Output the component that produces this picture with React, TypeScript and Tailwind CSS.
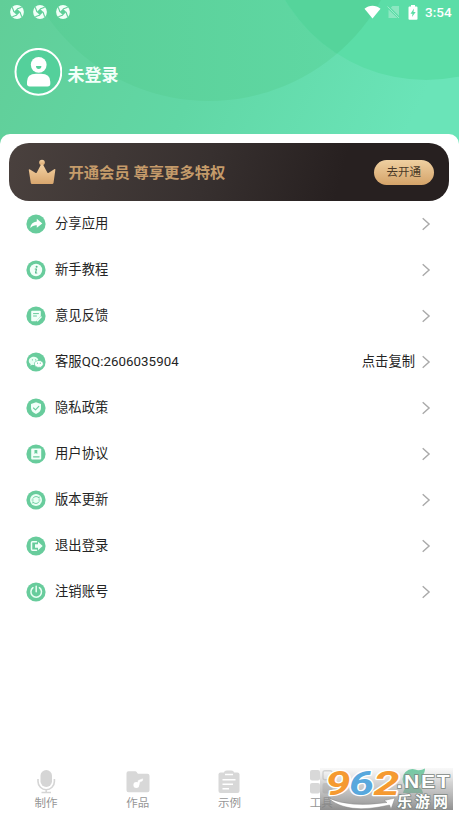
import type { ReactNode } from "react";

type IconProps = { className?: string };

function Aperture() {
  return (
    <svg viewBox="0 0 14 14" className="h-3.5 w-3.5">
      <circle cx="7" cy="7" r="6.900" fill="#f1fff8" />
      <path d="M3.700 7 7 3.700 10.300 7 7 10.300z" fill="#5ecf98" />
      <path d="M4 7 2.300 2.300M7 4 11.700 2.300M10 7 11.700 11.700M7 10 2.300 11.700" stroke="#5ecf98" strokeWidth="1.100" />
    </svg>
  );
}

function StatusBar() {
  return (
    <div className="relative flex h-6 items-center justify-between pr-[7px] pl-[10px]">
      <div className="flex gap-[9px]">
        <Aperture />
        <Aperture />
        <Aperture />
      </div>
      <div className="flex items-center">
        <svg viewBox="0 0 17 14" className="h-[14px] w-[17px]">
          <path d="M.5 3.700C5-.2 12-.2 16.500 3.700L8.500 13.500z" fill="#fff" />
        </svg>
        <svg viewBox="0 0 13 14" className="ml-[6px] h-[14px] w-[13px]">
          <path d="M5.500 1H12v10L3.800 2.800zM1.500 4.500 10.500 13H1.500z" fill="#fff" opacity=".3" />
          <path d="M.5 1.500 12 13" stroke="#fff" strokeWidth=".8" opacity=".5" />
        </svg>
        <svg viewBox="0 0 10 15" className="ml-[8px] h-[15px] w-[10px]">
          <path d="M3 0h4v1.500h1.500q1 0 1 1V14q0 .8-1 .8h-7q-1 0-1-.8V2.500q0-1 1-1H3z" fill="#fff" />
          <path d="M6 3.500 2.500 8.700h2L4 12l3.700-5H5.500z" fill="#5cdda6" />
        </svg>
        <span className="mt-px ml-[7px] w-[27px] font-[Roboto] text-[13.500px] leading-none font-medium text-white">3:54</span>
      </div>
    </div>
  );
}

function Header() {
  return (
    <header className="relative h-[134px]">
      <svg viewBox="0 0 459 146" className="absolute top-0 left-0 h-[146px] w-[459px]">
        <defs>
          <linearGradient id="sky" x1="0" x2="1" y1="0" y2=".15">
            <stop offset="0" stopColor="#61ce98" />
            <stop offset=".5" stopColor="#61d7a5" />
            <stop offset="1" stopColor="#6ae4b8" />
          </linearGradient>
          <linearGradient id="left" x1="0" x2="1">
            <stop offset="0" stopColor="#5acd95" />
            <stop offset="1" stopColor="#60daa6" />
          </linearGradient>
          <clipPath id="leftClip">
            <circle cx="209" cy="-96" r="197" />
          </clipPath>
        </defs>
        <rect width="459" height="146" fill="url(#sky)" />
        <circle cx="209" cy="-96" r="197" fill="url(#left)" />
        <circle cx="426" cy="-84" r="164" fill="#5bdda7" />
        <circle cx="426" cy="-84" r="164" fill="#55d49b" clipPath="url(#leftClip)" />
      </svg>
      <StatusBar />
      <div className="relative flex items-center pt-6 pl-[14px]">
        <svg viewBox="0 0 48 48" className="h-12 w-12">
          <circle cx="24.400" cy="23.800" r="22.900" fill="#54d09b" stroke="#fff" strokeWidth="2" />
          <circle cx="24.700" cy="16.800" r="7.900" fill="#fff" />
          <path d="M22 18h5.400a2.700 2.900 0 0 1-5.400 0z" fill="#54d09b" />
          <path d="M13 35.800v-2q0-8 9-8h5q9.300 0 9.300 8v2q0 2.700-2.700 2.700H15.700q-2.700 0-2.700-2.700z" fill="#fff" />
        </svg>
        <span className="mt-1.5 ml-[5.500px] text-[17px] leading-6 font-bold text-[#f3fffa]">未登录</span>
      </div>
    </header>
  );
}

function VipCard() {
  return (
    <section className="relative mr-[10px] ml-[9px] flex h-[58px] items-center overflow-hidden rounded-[20px] bg-linear-[105deg] from-[#4a413e] via-[#37302f] via-45% to-[#272020] to-75% pr-[15px] pl-[19px]">
      <svg viewBox="0 0 28 26" className="relative h-[26px] w-7">
        <defs>
          <linearGradient id="gold" x2="0" y2="1">
            <stop stopColor="#f3d1a2" />
            <stop offset="1" stopColor="#d8a66e" />
          </linearGradient>
        </defs>
        <circle cx="14" cy="3.500" r="2.800" fill="url(#gold)" />
        <path d="M13 5.500h2l4.300 8q.6.900 1.500.2l5.400-3.400q1.500-.7 1.100.9L25.500 24q-.3 1-1.300 1H4q-1 0-1.200-1L.8 11.200Q.6 9.700 2 10.400l5.300 3.400q.9.600 1.500-.3z" fill="url(#gold)" />
      </svg>
      <span className="relative mt-px ml-[12.500px] flex-1 text-[15.300px] leading-6 font-bold whitespace-nowrap text-[#c49b6a]">
        开通会员 尊享更多特权
      </span>
      <button className="relative h-[25px] w-[60.500px] rounded-full bg-linear-to-b from-[#efd0a1] to-[#d4a369] text-[11.500px] leading-[25px] text-[#4a3927]">
        去开通
      </button>
    </section>
  );
}

function Badge({ children }: { children: ReactNode }) {
  return (
    <svg viewBox="0 0 20 20" className="h-5 w-5" fill="none" strokeLinecap="round" strokeLinejoin="round">
      <circle cx="10" cy="10" r="9.600" fill="#68cc9c" />
      {children}
    </svg>
  );
}

const items: { label: string; action?: string; icon: ReactNode }[] = [
  {
    label: "分享应用",
    icon: <path d="M10.800 4.800 16.300 9.500 10.800 13.700V11.300Q7 10.900 4.200 14 4.700 8 10.800 7.400z" fill="#fff" />,
  },
  {
    label: "新手教程",
    icon: (
      <>
        <circle cx="10" cy="10" r="6.200" fill="#f2fff9" />
        <circle cx="10.600" cy="6.700" r="1" fill="#55b98a" />
        <path d="M9.200 9h1.300l-1 4h1.300" stroke="#55b98a" strokeWidth="1.100" />
      </>
    ),
  },
  {
    label: "意见反馈",
    icon: (
      <>
        <path d="M6 4.800h8q.8 0 .8.800v4.200l-4.600 5.400H6q-.8 0-.8-.8V5.600q0-.8.800-.8z" fill="#f2fff9" />
        <path d="M7.500 7.600h5M7.500 10h3" stroke="#68cc9c" />
        <path d="M11.500 14.700 15 11" stroke="#f2fff9" strokeWidth="1.600" />
      </>
    ),
  },
  {
    label: "客服QQ:2606035904",
    action: "点击复制",
    icon: (
      <>
        <path d="M8 4.800c-2.900 0-5.200 1.800-5.200 4.200 0 1.300.7 2.400 1.900 3.100L4.300 13.800l1.900-1q.9.300 1.800.2 3-.1 4.700-1.900Q13 5 8 4.800z" fill="#e9fff4" />
        <path d="M12.900 8.400c-2.600 0-4.500 1.600-4.500 3.500s1.900 3.500 4.500 3.500l1.200-.2 1.600.9-.4-1.500c1.200-.6 2-1.500 2-2.700 0-1.900-1.900-3.500-4.400-3.500z" fill="#fff" stroke="#68cc9c" strokeWidth=".7" />
        <path d="M6.400 7.800h.01M9.600 7.800h.01M11.500 11.200h.01M14.300 11.200h.01" stroke="#68cc9c" strokeWidth="1.200" />
      </>
    ),
  },
  {
    label: "隐私政策",
    icon: (
      <>
        <path d="M10 4.200 15 5.900V10q0 3.800-5 6-5-2.200-5-6V5.900z" fill="#f2fff9" />
        <path d="m7.500 10 2 1.900 3.300-3.500" stroke="#68cc9c" strokeWidth="1.100" />
      </>
    ),
  },
  {
    label: "用户协议",
    icon: (
      <>
        <rect x="5.200" y="4.600" width="10" height="11" rx="1" fill="#f2fff9" />
        <path d="M8.500 6v4l1.400-1 1.400 1V6z" fill="#68cc9c" />
        <path d="M7.500 12.800h5.600" stroke="#68cc9c" strokeWidth="1.200" />
      </>
    ),
  },
  {
    label: "版本更新",
    icon: (
      <>
        <circle cx="10" cy="10" r="6" fill="#e9fff4" />
        <path d="M6.900 8.300Q7.800 6.500 10 6.500t3.100 1.800V6.900M13.100 11.700Q12.200 13.500 10 13.500t-3.100-1.800v1.400M6 10h1.200M12.800 10H14" stroke="#68cc9c" strokeWidth=".9" />
      </>
    ),
  },
  {
    label: "退出登录",
    icon: (
      <>
        <path d="M10.500 5.700H6.500q-1 0-1 1v6.600q0 1 1 1h4" stroke="#f2fff9" strokeWidth="1.500" />
        <path d="M9 8.300h3V5.800l4.700 4.200-4.700 4.200v-2.500H9z" fill="#f2fff9" />
      </>
    ),
  },
  {
    label: "注销账号",
    icon: <path d="M10.200 4.200v5.500M7 5.700a5.300 5.300 0 1 0 6.400 0" stroke="#eafff4" strokeWidth="1.500" />,
  },
];

function MenuList() {
  return (
    <ul className="-mt-[.5px]">
      {items.map((item) => (
        <li key={item.label} className="flex h-[46px] items-center pr-7 pl-[25.500px] text-[13.300px] leading-5 text-[#242424]">
          <Badge>{item.icon}</Badge>
          <span className="mt-px ml-[9.500px] flex-1 tracking-[.06px]">{item.label}</span>
          {item.action && <span className="mt-px mr-[6px]">{item.action}</span>}
          <svg viewBox="0 0 10 14" className="h-3.5 w-2.5" fill="none" stroke="#a9a9a9" strokeWidth="1.400">
            <path d="m1.700 1.200 6.400 5.800-6.400 5.800" />
          </svg>
        </li>
      ))}
    </ul>
  );
}

function MicIcon({ className }: IconProps) {
  return (
    <svg viewBox="0 0 24 24" className={className} fill="none">
      <rect x="6.500" y="0" width="11.500" height="17" rx="5.750" fill="#d5d5d5" />
      <path d="M4 9v2.500a8.200 8.200 0 0 0 16.400 0V9M12.200 19v3.500M7.500 22.500h9.500" stroke="#d5d5d5" strokeWidth="1.600" />
    </svg>
  );
}

function FolderIcon({ className }: IconProps) {
  return (
    <svg viewBox="0 0 24 24" className={className}>
      <path d="M2.500 1.300h6.800q.8 0 1.300.7l1.300 1.800h9.600q2 0 2 2v14.400q0 2-2 2h-19q-2 0-2-2V3.300q0-2 2-2z" fill="#d8d8d8" />
      <circle cx="10.300" cy="15" r="2.900" fill="#fff" />
      <path d="m11.500 14.500.8-4 4.500-1.700-.5 2.200-2.500.8-.8 3.200z" fill="#fff" stroke="#fff" strokeWidth=".5" />
    </svg>
  );
}

function ClipboardIcon({ className }: IconProps) {
  return (
    <svg viewBox="0 0 24 24" className={className} fill="none">
      <rect x="1.500" y="2.500" width="21" height="20.500" rx="2" fill="#d8d8d8" />
      <path d="M6.500 4.800q0-4.300 3.500-4.300h4q3.500 0 3.500 4.300z" fill="#d8d8d8" />
      <path d="M8 4.500h8" stroke="#fff" strokeWidth="1.500" />
      <path d="M5.500 9.700h13M5.500 14.200h10.500M5.500 18.700H12" stroke="#fff" strokeWidth="1.500" />
    </svg>
  );
}

function GridIcon({ className }: IconProps) {
  return (
    <svg viewBox="0 0 24 24" className={className} fill="#d8d8d8">
      <rect x="1" y="0" width="10" height="10.500" rx="2" />
      <rect x="14" y=".7" width="9" height="9" rx="2" fill="none" stroke="#d8d8d8" strokeWidth="1.400" />
      <rect x="1" y="13" width="10" height="10.500" rx="2" />
      <rect x="13.500" y="13" width="10" height="10.500" rx="2" />
    </svg>
  );
}

function ProfileIcon({ className }: IconProps) {
  return (
    <svg viewBox="0 0 24 24" className={className} fill="#68cda0">
      <circle cx="11.500" cy="9" r="10" />
      <path d="M15 0q5 1 9-1.500 0 5-4 9zM2 23q1-7 10-7t10 7z" />
    </svg>
  );
}

const tabs = [
  { label: "制作", Icon: MicIcon },
  { label: "作品", Icon: FolderIcon },
  { label: "示例", Icon: ClipboardIcon },
  { label: "工具", Icon: GridIcon },
  { label: "", Icon: ProfileIcon },
];

function TabBar() {
  return (
    <nav className="mt-auto grid h-[46px] grid-cols-5">
      {tabs.map(({ label, Icon }, i) => (
        <div key={i} className="flex flex-col items-center">
          <Icon className="h-6 w-6 overflow-visible" />
          <span className="mt-px text-[11.500px] leading-[17px] text-[#969696]">{label}</span>
        </div>
      ))}
    </nav>
  );
}

function Watermark() {
  return (
    <svg viewBox="0 0 139 52" className="absolute top-[764px] left-[320px] h-[52px] w-[139px]">
      <defs>
        <linearGradient id="shade" x2="0" y2="1">
          <stop stopColor="#c0c0c0" stopOpacity=".1" />
          <stop offset=".35" stopColor="#a8a8a8" stopOpacity=".5" />
          <stop offset="1" stopColor="#808080" stopOpacity=".88" />
        </linearGradient>
      </defs>
      <rect y="4" width="133" height="42" fill="url(#shade)" />
      <path d="M8 34Q30 44 67 38.500L64 36.500 75 34 71 45 69.500 41Q27 51 8 34z" fill="#fff" stroke="#888" strokeWidth=".5" />
      <g
        fontFamily="Roboto, sans-serif"
        fontWeight="700"
        fontStyle="italic"
        fontSize="34"
        stroke="#fff"
        strokeWidth="2.500"
        paintOrder="stroke"
        strokeLinejoin="round"
      >
        <text x="5.500" y="30.500" textLength="25" lengthAdjust="spacingAndGlyphs" fill="#f59a31">9</text>
        <text x="29" y="30.500" textLength="25" lengthAdjust="spacingAndGlyphs" fill="#58a8dd">6</text>
        <text x="53.500" y="30.500" textLength="26" lengthAdjust="spacingAndGlyphs" fill="#f59a31">2</text>
      </g>
      <g fill="#fff" stroke="#7c8782" strokeWidth="1.500" paintOrder="stroke" fontWeight="700">
        <text x="76.500" y="24" textLength="55" lengthAdjust="spacingAndGlyphs" letterSpacing="1.500" fontFamily="Liberation Sans, sans-serif" fontSize="18">.NET</text>
        <text x="77" y="42.500" textLength="51" fontFamily="Noto Sans CJK SC, sans-serif" fontSize="15">乐游网</text>
      </g>
    </svg>
  );
}

export default function App() {
  return (
    <div className="relative flex h-[816px] w-[459px] flex-col overflow-hidden bg-white font-[Roboto,'Noto_Sans_CJK_SC',sans-serif]">
      <Header />
      <main className="relative flex flex-1 flex-col rounded-t-[10px] bg-white pt-[9px]">
        <VipCard />
        <MenuList />
        <TabBar />
      </main>
      <Watermark />
    </div>
  );
}
